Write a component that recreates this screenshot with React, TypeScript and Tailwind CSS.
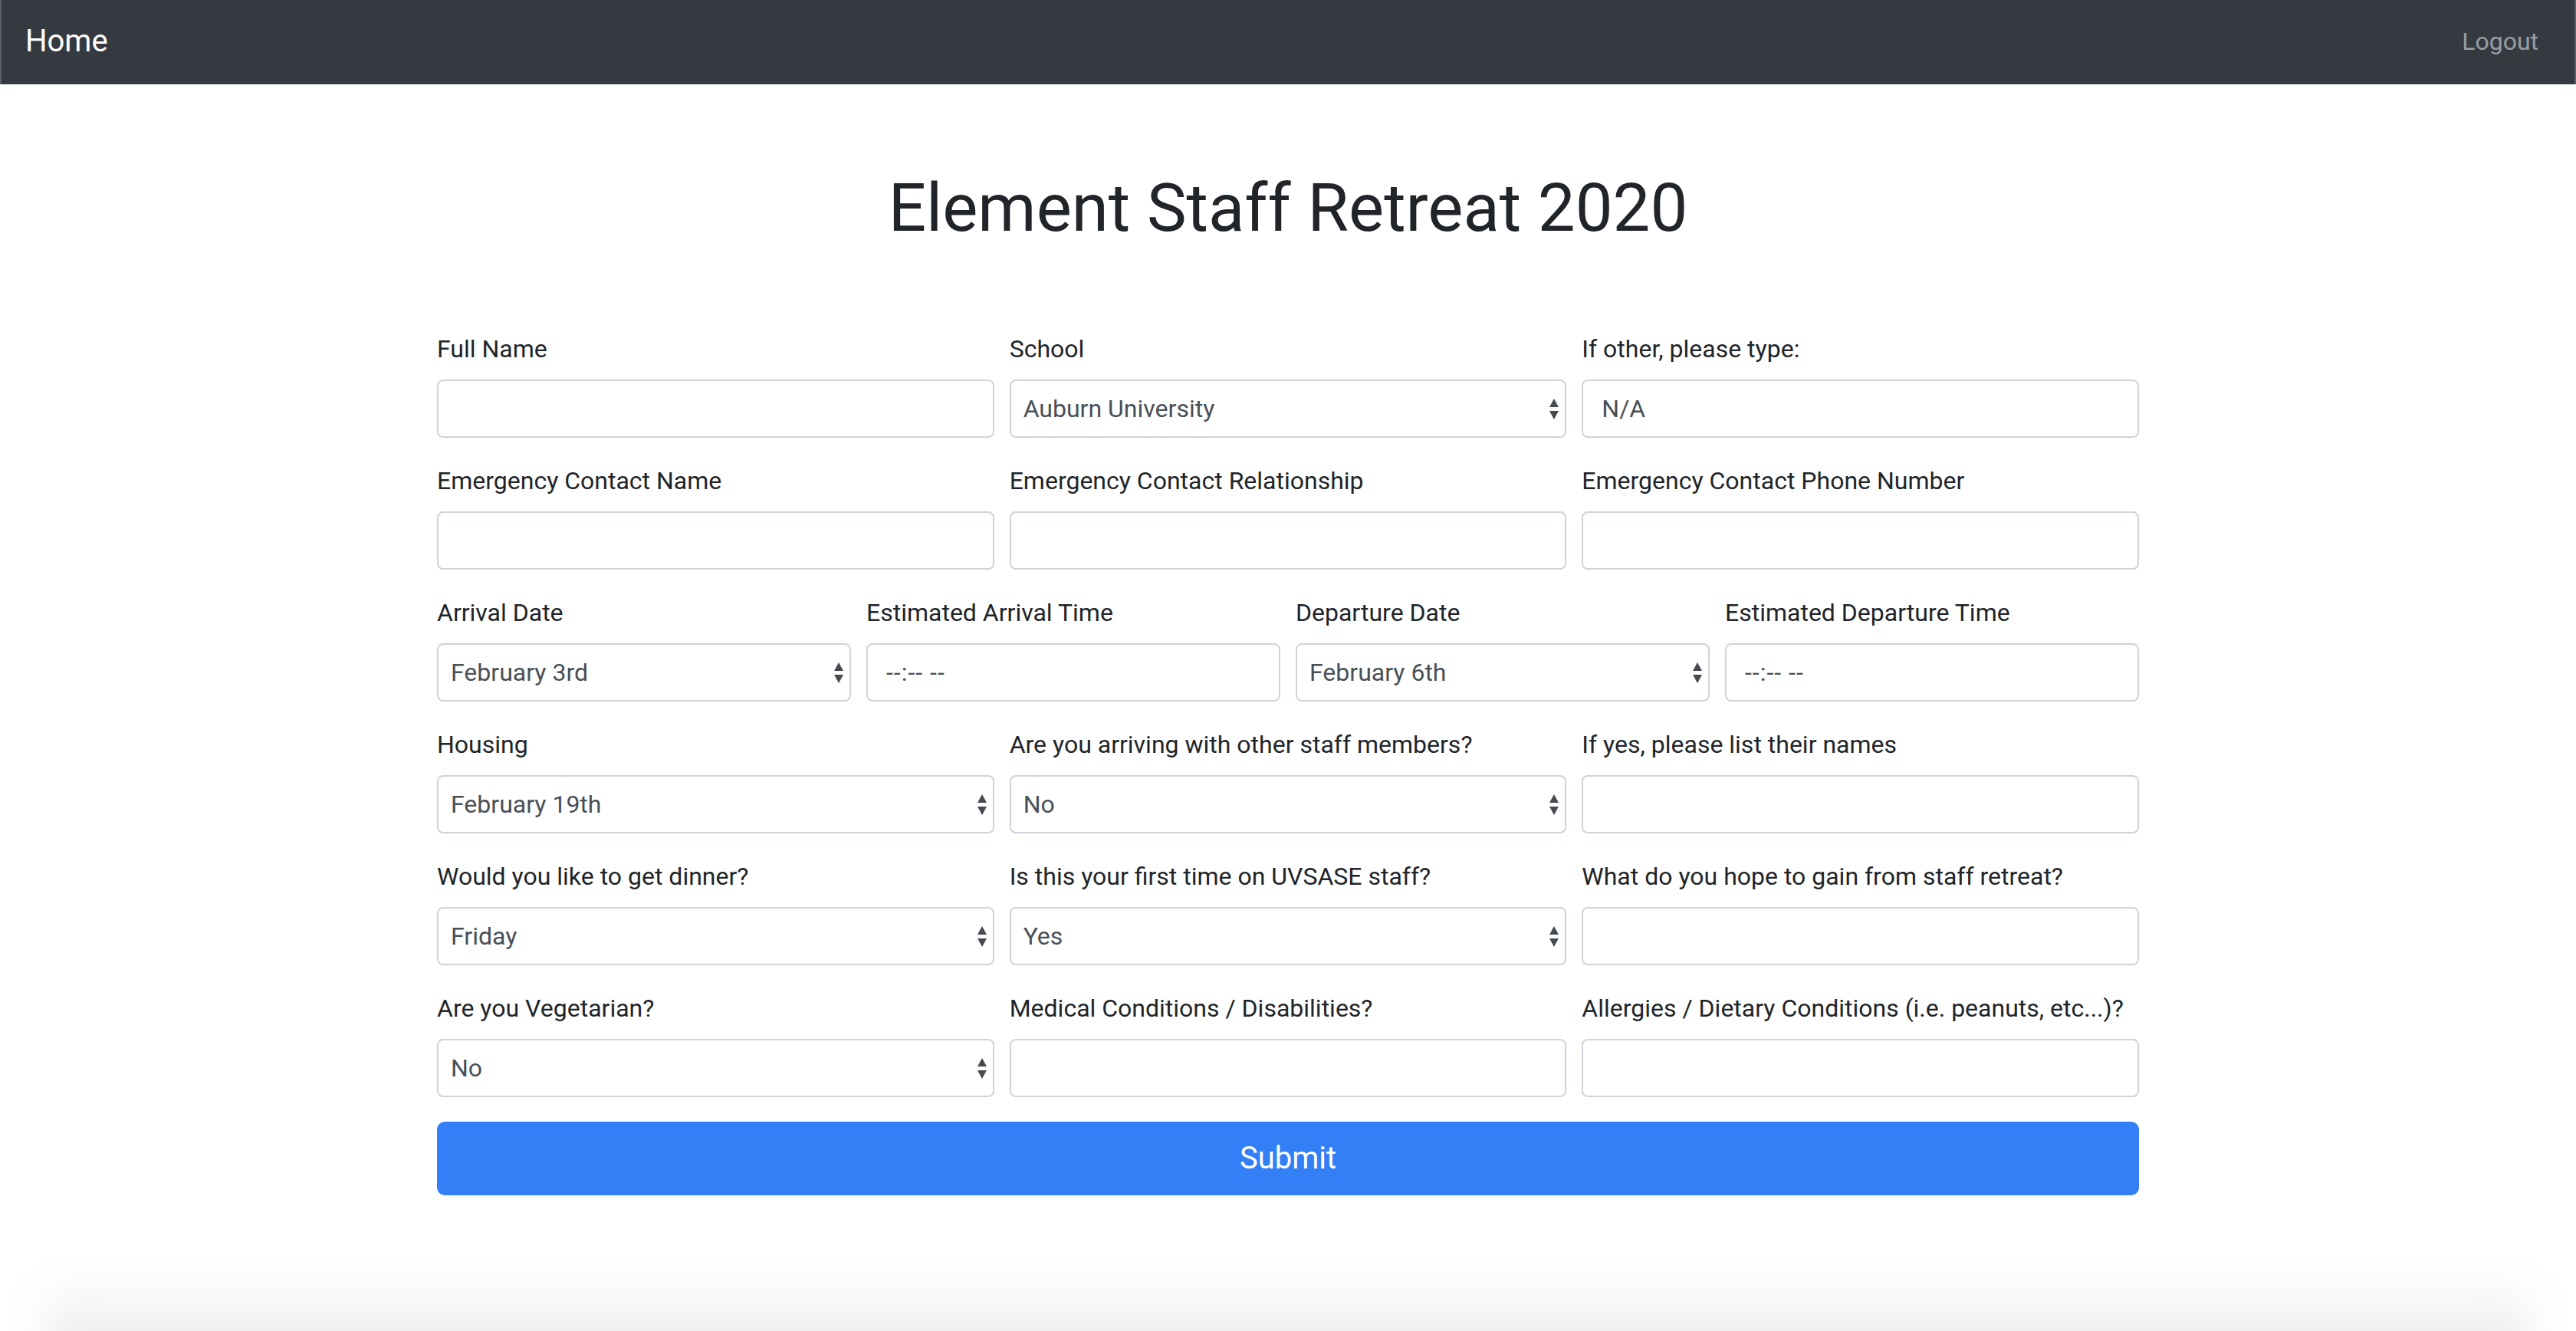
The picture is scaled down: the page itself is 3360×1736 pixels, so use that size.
import React from "react";

const Label = ({ children }: { children: React.ReactNode }) => (
  <label className="block text-[32px] leading-[48px] mb-[16px] text-[#212529] whitespace-nowrap">
    {children}
  </label>
);

const TextInput = ({ value, muted }: { value?: string; muted?: boolean }) => (
  <input
    type="text"
    defaultValue={value ?? ""}
    className={
      "block h-[76px] w-full rounded-[8px] border-2 border-[#ced4da] bg-white px-[24px] text-[32px] outline-none " +
      (muted ? "text-[#495057] tracking-[1px]" : "text-[#495057]")
    }
  />
);

const Arrows = () => (
  <svg width="14" height="29" viewBox="0 0 14 29" className="shrink-0">
    <polygon points="1,12 7,1 13,12" fill="#464b51" />
    <polygon points="1,17 13,17 7,28" fill="#464b51" />
  </svg>
);

const SelectBox = ({ value }: { value: string }) => (
  <div className="flex h-[76px] w-full items-center justify-between rounded-[8px] border-2 border-[#ced4da] bg-white pl-[16px] pr-[7px] text-[32px] text-[#495057]">
    <span>{value}</span>
    <Arrows />
  </div>
);

type Field = { label: string; kind: "input" | "select" | "time"; value?: string };

const Cell = ({ f }: { f: Field }) => (
  <div className="mb-[32px] min-w-0">
    <Label>{f.label}</Label>
    {f.kind === "select" ? (
      <SelectBox value={f.value ?? ""} />
    ) : f.kind === "time" ? (
      <TextInput value="--:-- --" muted />
    ) : (
      <TextInput value={f.value} />
    )}
  </div>
);

const rows3: Field[][] = [
  [
    { label: "Full Name", kind: "input" },
    { label: "School", kind: "select", value: "Auburn University" },
    { label: "If other, please type:", kind: "input", value: "N/A" },
  ],
  [
    { label: "Emergency Contact Name", kind: "input" },
    { label: "Emergency Contact Relationship", kind: "input" },
    { label: "Emergency Contact Phone Number", kind: "input" },
  ],
];

const row4: Field[] = [
  { label: "Arrival Date", kind: "select", value: "February 3rd" },
  { label: "Estimated Arrival Time", kind: "time" },
  { label: "Departure Date", kind: "select", value: "February 6th" },
  { label: "Estimated Departure Time", kind: "time" },
];

const rowsAfter: Field[][] = [
  [
    { label: "Housing", kind: "select", value: "February 19th" },
    { label: "Are you arriving with other staff members?", kind: "select", value: "No" },
    { label: "If yes, please list their names", kind: "input" },
  ],
  [
    { label: "Would you like to get dinner?", kind: "select", value: "Friday" },
    { label: "Is this your first time on UVSASE staff?", kind: "select", value: "Yes" },
    { label: "What do you hope to gain from staff retreat?", kind: "input" },
  ],
  [
    { label: "Are you Vegetarian?", kind: "select", value: "No" },
    { label: "Medical Conditions / Disabilities?", kind: "input" },
    { label: "Allergies / Dietary Conditions (i.e. peanuts, etc...)?", kind: "input" },
  ],
];

export default function App() {
  return (
    <div className="flex h-[1736px] w-[3360px] flex-col overflow-hidden bg-white font-['Roboto','Liberation_Sans',sans-serif]">
      <nav className="flex h-[110px] shrink-0 items-center justify-between border-x-2 border-x-[#5b5f64] bg-[#353a41] pb-[3px] pl-[31px] pr-[47px]">
        <span className="text-[40px] text-white">Home</span>
        <span className="text-[32px] text-[#9a9da1]">Logout</span>
      </nav>

      <main className="mx-auto w-[2220px] pt-[111px]">
        <h1 className="mb-[110px] text-center text-[87px] font-normal leading-[100px] text-[#212529]">
          Element Staff Retreat 2020
        </h1>

        <form onSubmit={(e) => e.preventDefault()}>
          {rows3.map((r, i) => (
            <div key={i} className="grid grid-cols-3 gap-x-[20px]">
              {r.map((f) => (
                <Cell key={f.label} f={f} />
              ))}
            </div>
          ))}
          <div className="grid grid-cols-4 gap-x-[20px]">
            {row4.map((f) => (
              <Cell key={f.label} f={f} />
            ))}
          </div>
          {rowsAfter.map((r, i) => (
            <div key={i} className="grid grid-cols-3 gap-x-[20px]">
              {r.map((f) => (
                <Cell key={f.label} f={f} />
              ))}
            </div>
          ))}
          <button
            type="submit"
            className="block h-[96px] w-full rounded-[10px] bg-[#3380f6] text-[40px] text-white"
          >
            Submit
          </button>
        </form>
      </main>

      <div className="mt-auto h-[96px] shrink-0 overflow-hidden">
        <div className="mx-[60px] mt-[14px] h-[140px] bg-linear-to-b from-white to-[#e6e6e6] blur-[26px]" />
      </div>
    </div>
  );
}
